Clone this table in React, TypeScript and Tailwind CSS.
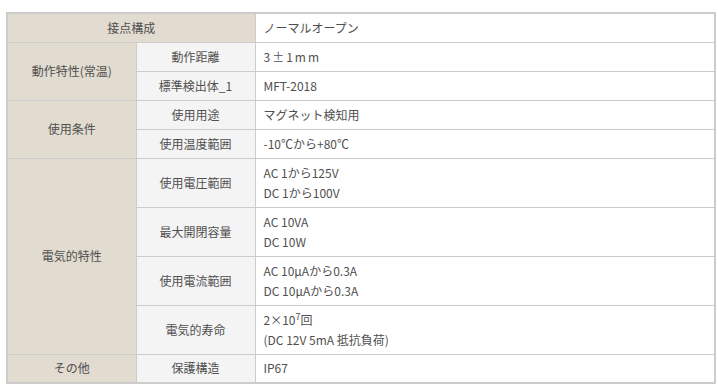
const label = "bg-[#e2dbcf] border border-[#cccccc] text-center align-middle";
const sub = "bg-[#f4f4f4] border border-[#cccccc] text-center align-middle";
const val = "bg-white border border-[#cccccc] pl-2 pr-2 align-middle text-left";

const App = () => {
  return (
    <div className="w-[718px] h-[385px] bg-white pt-3 pl-[6px] overflow-hidden">
      <table
        className="w-[710px] border-collapse border-2 border-[#cccccc] text-[12px] leading-[20px] text-[#505050]"
        style={{ fontFamily: '"Noto Sans CJK JP", "Noto Sans", sans-serif' }}
      >
        <colgroup>
          <col className="w-[129px]" />
          <col className="w-[119px]" />
          <col />
        </colgroup>
        <tbody>
          <tr className="h-[29px]">
            <td colSpan={2} className={label}>接点構成</td>
            <td className={val}>ノーマルオープン</td>
          </tr>
          <tr className="h-[29px]">
            <td rowSpan={2} className={label}>動作特性(常温)</td>
            <td className={sub}>動作距離</td>
            <td className={val}>
              <span className="tracking-[2px]">3±1mm</span>
            </td>
          </tr>
          <tr className="h-[29px]">
            <td className={sub}>標準検出体_1</td>
            <td className={val}>MFT-2018</td>
          </tr>
          <tr className="h-[29px]">
            <td rowSpan={2} className={label}>使用条件</td>
            <td className={sub}>使用用途</td>
            <td className={val}>マグネット検知用</td>
          </tr>
          <tr className="h-[29px]">
            <td className={sub}>使用温度範囲</td>
            <td className={val}>-10℃から+80℃</td>
          </tr>
          <tr className="h-[49px]">
            <td rowSpan={4} className={label}>電気的特性</td>
            <td className={sub}>使用電圧範囲</td>
            <td className={val}>
              AC 1から125V
              <br />
              DC 1から100V
            </td>
          </tr>
          <tr className="h-[49px]">
            <td className={sub}>最大開閉容量</td>
            <td className={val}>
              AC 10VA
              <br />
              DC 10W
            </td>
          </tr>
          <tr className="h-[49px]">
            <td className={sub}>使用電流範囲</td>
            <td className={val}>
              AC 10µAから0.3A
              <br />
              DC 10µAから0.3A
            </td>
          </tr>
          <tr className="h-[49px]">
            <td className={sub}>電気的寿命</td>
            <td className={val}>
              2×10<sup className="text-[9px]">7</sup>回
              <br />
              (DC 12V 5mA 抵抗負荷)
            </td>
          </tr>
          <tr className="h-[29px]">
            <td className={label}>その他</td>
            <td className={sub}>保護構造</td>
            <td className={val}>IP67</td>
          </tr>
        </tbody>
      </table>
    </div>
  );
};

export default App;
